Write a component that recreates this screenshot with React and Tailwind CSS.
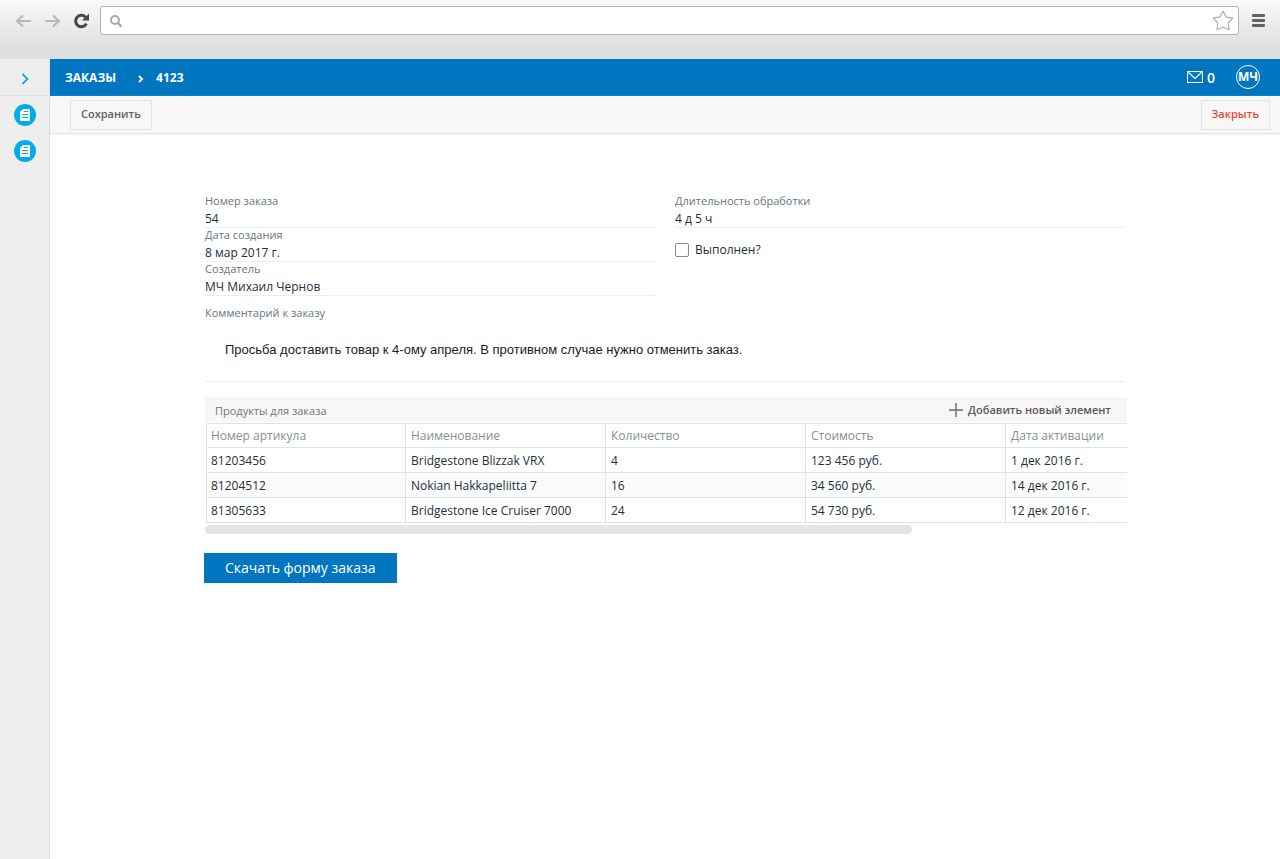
import React, { useState } from "react";

const products = [
  { article: "81203456", name: "Bridgestone Blizzak VRX", amount: "4", price: "123 456 руб.", date: "1 дек 2016 г." },
  { article: "81204512", name: "Nokian Hakkapeliitta 7", amount: "16", price: "34 560 руб.", date: "14 дек 2016 г." },
  { article: "81305633", name: "Bridgestone Ice Cruiser 7000", amount: "24", price: "54 730 руб.", date: "12 дек 2016 г." },
];

function BrowserBar() {
  return (
    <div className="h-[59px] bg-linear-to-b from-[#fafafa] from-0% via-[#e9e9e9] via-50% to-[#dfdfdf] to-80% flex items-start pt-[6px]">
      <div className="w-[100px] h-[29px] flex items-center pl-[15px] shrink-0">
        <button aria-label="Назад" className="w-[29px]">
          <svg width="17" height="14" viewBox="0 0 17 14" fill="none" stroke="#b8b8b8" strokeWidth="2.2">
            <path d="M8 1.500L2 7l6 5.500M2 7h14" />
          </svg>
        </button>
        <button aria-label="Вперёд" className="w-[29px]">
          <svg width="17" height="14" viewBox="0 0 17 14" fill="none" stroke="#b8b8b8" strokeWidth="2.2">
            <path d="M9 1.500l6 5.500-6 5.500M15 7H1" />
          </svg>
        </button>
        <button aria-label="Обновить">
          <svg width="17" height="16" viewBox="0 0 17 16">
            <path d="M12.600 4.200A5.700 5.700 0 1 0 13.400 10.600" fill="none" stroke="#484848" strokeWidth="3" />
            <path d="M16 0.600V7.600H9z" fill="#484848" />
          </svg>
        </button>
      </div>
      <div className="flex-1 h-[29px] bg-white border border-[#b0b2b5] rounded-[3px] flex items-center pl-2 pr-1">
        <svg width="14" height="14" viewBox="0 0 14 14" fill="none" stroke="#aaa" className="shrink-0">
          <circle cx="6" cy="6" r="4" strokeWidth="2" />
          <path d="M9 9l3.400 3.600" strokeWidth="2.4" />
        </svg>
        <input aria-label="Адрес" className="flex-1 min-w-0 h-full px-2 text-sm outline-none" />
        <button aria-label="В избранное">
          <svg width="22" height="21" viewBox="0 0 22 21" fill="#fff" stroke="#a9a9a9" strokeWidth="1.1" strokeLinejoin="round">
            <path d="M11 1l3.200 5.900 6.600 1.200-4.600 4.900.9 6.700-6.100-2.400-6.100 2.400.9-6.700L1.200 8.100l6.600-1.200z" />
          </svg>
        </button>
      </div>
      <button aria-label="Меню" className="w-[41px] h-[29px] flex items-center pl-[13px] shrink-0">
        <svg width="13" height="13" viewBox="0 0 13 13" fill="#636363">
          <rect width="13" height="3" rx="1" />
          <rect y="5" width="13" height="3" rx="1" />
          <rect y="10" width="13" height="3" rx="1" />
        </svg>
      </button>
    </div>
  );
}

function DocButton({ label }) {
  return (
    <button aria-label={label} className="w-[22px] h-[22px] rounded-full bg-[#00ade9] flex items-center justify-center">
      <svg width="10" height="12" viewBox="0 0 10 12">
        <path d="M3 0h7v12H0V3z" fill="#fff" />
        <path d="M4 2.500h4M2 5.500h6M2 8.500h6" stroke="#00ade9" />
      </svg>
    </button>
  );
}

function Sidebar() {
  return (
    <aside className="w-[50px] shrink-0 bg-[#eee] border-r border-[#e0e0e0] flex flex-col items-center">
      <button aria-label="Развернуть меню" className="w-full h-[37px] border-b border-[#e2e2e2] flex items-center justify-center pt-1 pl-px">
        <svg width="8" height="12" viewBox="0 0 8 12" fill="none" stroke="#1fa5dd" strokeWidth="1.8">
          <path d="M1.500 1l5 5-5 5" />
        </svg>
      </button>
      <div className="flex flex-col gap-[14px] pt-2">
        <DocButton label="Заказы" />
        <DocButton label="Документы" />
      </div>
    </aside>
  );
}

function Field({ label, value }) {
  return (
    <div className="border-b border-[#ececec]">
      <div className="text-[11px] leading-[14px] text-[#66757f]">{label}</div>
      <div className="pt-[2px] text-[12px] leading-[17px] text-[#22303c]">{value}</div>
    </div>
  );
}

function ProductsTable() {
  return (
    <section className="mt-[15px] -mr-[2px]">
      <div className="h-[25px] bg-[#f8f6f7] flex items-center justify-between pl-[10px] pr-4">
        <h2 className="text-[11px] pt-[3px] text-[#6b767e]">Продукты для заказа</h2>
        <button className="flex items-center gap-[5px] text-[11px] font-semibold text-[#5a5a5a]">
          <svg width="14" height="14" viewBox="0 0 14 14" stroke="#6a6a6a" strokeWidth="1.4">
            <path d="M7 0v14M0 7h14" />
          </svg>
          <span className="pt-px">Добавить новый элемент</span>
        </button>
      </div>
      <div className="pt-px pl-px overflow-hidden">
        <table className="w-full table-fixed border-separate border-spacing-0 text-[12px] leading-[22px] text-left text-[#22303c]">
          <thead>
            <tr className="text-[#858f96] leading-[23px]">
              <th className="w-[199px] border-y border-l border-[#dce3e6] px-1 font-normal">Номер артикула</th>
              <th className="w-[200px] border-y border-l border-[#dce3e6] px-[5px] font-normal">Наименование</th>
              <th className="w-[200px] border-y border-l border-[#dce3e6] px-[5px] font-normal">Количество</th>
              <th className="w-[200px] border-y border-l border-[#dce3e6] px-[5px] font-normal">Стоимость</th>
              <th className="border-y border-l border-[#dce3e6] px-[5px] font-normal">Дата активации</th>
            </tr>
          </thead>
          <tbody>
            {products.map((product) => (
              <tr key={product.article} className="even:bg-[#fbfbfb]">
                <td className="border-b border-l border-[#dce3e6] pt-[2px] px-1">{product.article}</td>
                <td className="border-b border-l border-[#dce3e6] pt-[2px] px-[5px]">{product.name}</td>
                <td className="border-b border-l border-[#dce3e6] pt-[2px] px-[5px]">{product.amount}</td>
                <td className="border-b border-l border-[#dce3e6] pt-[2px] px-[5px]">{product.price}</td>
                <td className="border-b border-l border-[#dce3e6] pt-[2px] px-[5px]">{product.date}</td>
              </tr>
            ))}
          </tbody>
        </table>
      </div>
      <div className="mt-[2px] h-[9px] w-[707px] max-w-full rounded-full bg-[#e4e4e4]" />
    </section>
  );
}

export default function App() {
  const [isDone, setIsDone] = useState(false);

  return (
    <div className="min-h-screen flex flex-col bg-white font-['Open_Sans',sans-serif]">
      <BrowserBar />
      <div className="flex-1 flex">
        <Sidebar />
        <div className="flex-1 min-w-0">
          <header className="h-[37px] bg-[#0076c0] border-b border-[#0086c8] text-white flex items-center justify-between pl-[15px] pr-5">
            <nav className="flex items-center pt-[2px] text-[12px] font-bold">
              <a href="#orders">ЗАКАЗЫ</a>
              <svg width="6" height="8" viewBox="0 0 6 8" fill="none" stroke="#fff" strokeWidth="2" className="ml-[22px] mr-3 mt-[2px]">
                <path d="M1 1l3 3-3 3" />
              </svg>
              <a href="#4123">4123</a>
            </nav>
            <div className="flex items-center">
              <a href="#mail" className="flex items-center gap-1 text-[14px] font-semibold">
                <svg width="16" height="12" viewBox="0 0 16 12" fill="none" stroke="#fff" strokeWidth="1.1">
                  <rect x="0.500" y="0.500" width="15" height="11" />
                  <path d="M1 1l7 6.500L15 1" />
                </svg>
                0
              </a>
              <button className="ml-[21px] w-6 h-6 rounded-full border border-white flex items-center justify-center text-[12px] font-bold">МЧ</button>
            </div>
          </header>
          <div className="h-[38px] bg-[#f8f6f7] border-b border-[#e2e4e6] shadow-xs flex items-center justify-between pl-5 pr-[10px]">
            <button className="h-[30px] px-[10px] border border-[#dfe5e8] rounded-[2px] text-[11px] leading-none pb-[3px] font-semibold text-[#606060]">
              Сохранить
            </button>
            <button className="h-[30px] px-[10px] border border-[#dfe5e8] rounded-[2px] text-[11px] leading-none pb-[3px] font-semibold text-[#e8493a]">
              Закрыть
            </button>
          </div>

          <main className="max-w-[920px] mx-auto pt-[60px]">
            <div className="grid grid-cols-2 gap-5">
              <div>
                <Field label="Номер заказа" value="54" />
                <Field label="Дата создания" value="8 мар 2017 г." />
                <Field label="Создатель" value="МЧ Михаил Чернов" />
              </div>
              <div>
                <Field label="Длительность обработки" value="4 д 5 ч" />
                <label className="mt-3 flex items-center gap-[6px] text-[12px] text-[#22303c]">
                  <input
                    type="checkbox"
                    checked={isDone}
                    onChange={() => setIsDone(!isDone)}
                    className="appearance-none w-[14px] h-[14px] bg-white border border-[#7f8a96] rounded-[2px] checked:bg-[#0076c0]"
                  />
                  <span className="pt-px">Выполнен?</span>
                </label>
              </div>
            </div>

            <div className="pt-[9px] border-b border-[#ececec]">
              <div className="text-[11px] leading-4 text-[#66757f]">Комментарий к заказу</div>
              <p className="px-5 pt-5 pb-[22px] text-[13px] leading-[18px] text-[#1c1c1c] font-['Liberation_Sans',sans-serif]">
                Просьба доставить товар к 4-ому апреля. В противном случае нужно отменить заказ.
              </p>
            </div>

            <ProductsTable />

            <button className="mt-[19px] -ml-px h-[30px] px-[21px] pb-[2px] bg-[#0076c0] text-white text-[14px] font-medium">
              Скачать форму заказа
            </button>
          </main>
        </div>
      </div>
    </div>
  );
}
